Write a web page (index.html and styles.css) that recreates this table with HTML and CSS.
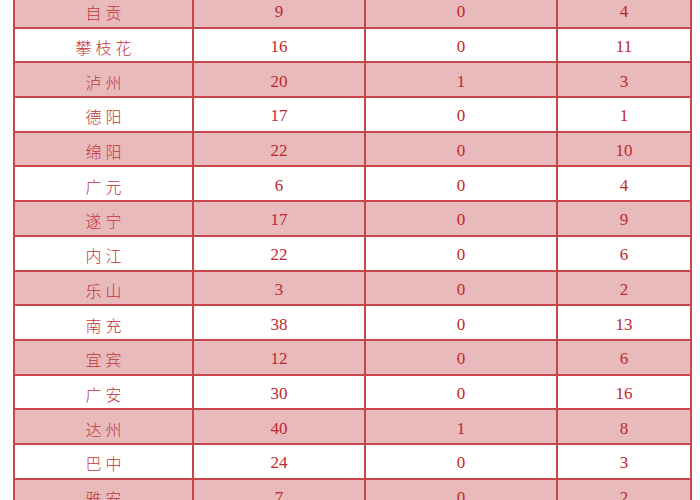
FILE: index.html
```html
<!DOCTYPE html>
<html lang="zh">
<head>
<meta charset="utf-8">
<link rel="stylesheet" href="styles.css">
</head>
<body>
<div class="page">
<table class="stats">
<colgroup><col class="c1"><col class="c2"><col class="c3"><col class="c4"></colgroup>
<tbody>
<tr class="pink"><td class="city">自贡</td><td>9</td><td>0</td><td>4</td></tr>
<tr><td class="city">攀枝花</td><td>16</td><td>0</td><td>11</td></tr>
<tr class="pink"><td class="city">泸州</td><td>20</td><td>1</td><td>3</td></tr>
<tr><td class="city">德阳</td><td>17</td><td>0</td><td>1</td></tr>
<tr class="pink"><td class="city">绵阳</td><td>22</td><td>0</td><td>10</td></tr>
<tr><td class="city">广元</td><td>6</td><td>0</td><td>4</td></tr>
<tr class="pink"><td class="city">遂宁</td><td>17</td><td>0</td><td>9</td></tr>
<tr><td class="city">内江</td><td>22</td><td>0</td><td>6</td></tr>
<tr class="pink"><td class="city">乐山</td><td>3</td><td>0</td><td>2</td></tr>
<tr><td class="city">南充</td><td>38</td><td>0</td><td>13</td></tr>
<tr class="pink"><td class="city">宜宾</td><td>12</td><td>0</td><td>6</td></tr>
<tr><td class="city">广安</td><td>30</td><td>0</td><td>16</td></tr>
<tr class="pink"><td class="city">达州</td><td>40</td><td>1</td><td>8</td></tr>
<tr><td class="city">巴中</td><td>24</td><td>0</td><td>3</td></tr>
<tr class="pink"><td class="city">雅安</td><td>7</td><td>0</td><td>2</td></tr>
</tbody>
</table>
</div>
</body>
</html>
```

FILE: styles.css
```css
html, body {
  margin: 0;
  padding: 0;
  background: #ffffff;
}
.page {
  width: 700px;
  height: 500px;
  overflow: hidden;
  padding-left: 13px;
  box-sizing: border-box;
}
.stats {
  margin-top: -8px;
  border-collapse: collapse;
  table-layout: fixed;
  width: 677px;
}
.c1 { width: 179px; }
.c2 { width: 172px; }
.c3 { width: 192px; }
.c4 { width: 134px; }
.stats td {
  border: 2px solid #c9474a;
  height: 34.7px;
  padding: 4px 0 0 0;
  text-align: center;
  vertical-align: middle;
  color: #c0282c;
  font-family: "Liberation Serif", "Times New Roman", serif;
  font-size: 17px;
  box-sizing: border-box;
}
.stats td.city {
  font-family: "Noto Sans CJK SC", "Noto Sans", sans-serif;
  font-weight: 300;
  font-size: 16px;
  letter-spacing: 4px;
  text-indent: 4px;
  color: #c2373b;
}
.stats tr.pink td {
  background: #e8babb;
}
```
